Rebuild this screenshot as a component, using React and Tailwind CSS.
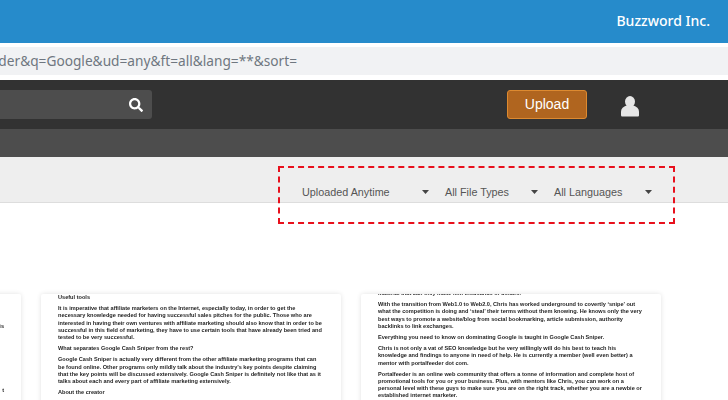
import { FaSearch } from 'react-icons/fa';

const filters = [
  { label: 'Uploaded Anytime', width: 'w-[127px] mr-[16px]' },
  { label: 'All File Types', width: 'w-[93px] mr-[16px]' },
  { label: 'All Languages', width: 'w-[98px]' },
];

const middleCard = [
  { lines: ['Useful tools'] },
  {
    lines: [
      'It is imperative that affiliate marketers on the Internet, especially today, in order to get the',
      'necessary knowledge needed for having successful sales pitches for the public. Those who are',
      'interested in having their own ventures with affiliate marketing should also know that in order to be',
      'successful in this field of marketing, they have to use certain tools that have already been tried and',
      'tested to be very successful.',
    ],
  },
  { lines: ['What separates Google Cash Sniper from the rest?'] },
  {
    lines: [
      'Google Cash Sniper is actually very different from the other affiliate marketing programs that can',
      'be found online. Other programs only mildly talk about the industry’s key points despite claiming',
      'that the key points will be discussed extensively. Google Cash Sniper is definitely not like that as it',
      'talks about each and every part of affiliate marketing extensively.',
    ],
  },
  { lines: ['About the creator'] },
];

const rightCard = [
  { lines: ['material that can only make him thousands of dollars.'] },
  { lines: ['With the transition from Web1.0 to Web2.0, Chris has worked underground to covertly ‘snipe’ out',
    'what the competition is doing and ‘steal’ their terms without them knowing. He knows only the very',
    'best ways to promote a website/blog from social bookmarking, article submission, authority',
    'backlinks to link exchanges.'] },
  { lines: ['Everything you need to know on dominating Google is taught in Google Cash Sniper.'] },
  { lines: ['Chris is not only a vat of SEO knowledge but he very willingly will do his best to teach his',
    'knowledge and findings to anyone in need of help. He is currently a member (well even better) a',
    'mentor with portalfeeder dot com.'] },
  { lines: ['Portalfeeder is an online web community that offers a tonne of information and complete host of',
    'promotional tools for you or your business. Plus, with mentors like Chris, you can work on a',
    'personal level with these guys to make sure you are on the right track, whether you are a newbie or',
    'established internet marketer.'] },
];

const docText = "font-['Liberation_Sans',sans-serif] text-[5.6px] leading-[7.2px] font-bold text-[#1f1f1f] whitespace-nowrap blur-[0.5px]";
const cardClass = 'w-[300px] h-[120px] bg-white rounded-[2px] shadow-[0_0_5px_rgba(0,0,0,0.12)] overflow-hidden';

function Doc({ blocks, className = '' }) {
  return (
    <div className={`flex flex-col gap-[4px] ${docText} ${className}`}>
      {blocks.map((b, i) => (
        <div key={i}>
          {b.lines.map((l, j) => (
            <div key={j}>{l}</div>
          ))}
        </div>
      ))}
    </div>
  );
}

export default function App() {
  return (
    <div className="relative w-[728px] h-[400px] overflow-hidden bg-white">
      {/* Top bar */}
      <div className="h-[43px] bg-[#268bcb] flex items-center justify-end pr-[18px] pb-[2px] text-white text-[14px] font-medium font-['Noto_Sans',sans-serif]">
        Buzzword Inc.
      </div>

      {/* Address bar */}
      <div className="mt-[4px] h-[28px] bg-[#f1f2f4] flex items-center">
        <div className="w-[297px] flex justify-end whitespace-nowrap text-[13.7px] text-[#6f7780] font-['Noto_Sans',sans-serif]">
          der&amp;q=Google&amp;ud=any&amp;ft=all&amp;lang=**&amp;sort=
        </div>
      </div>

      {/* Nav */}
      <div className="mt-[5px] h-[49px] bg-[#323232] flex items-center">
        <div className="w-[152px] h-[29px] bg-[#4d4d4d] rounded-r-[3px] flex items-center justify-end pr-[9px]">
          <FaSearch className="text-white text-[14px]" />
        </div>
        <button className="ml-[355px] w-[80px] h-[29px] bg-[#b0651f] border border-[#dd8a30] rounded-[3px] text-white text-[14px] font-['Liberation_Sans',sans-serif]">
          Upload
        </button>
        <svg className="ml-[34px] mt-[3px]" width="18" height="21" viewBox="0 0 18 21">
          <ellipse cx="9" cy="5.6" rx="5" ry="5.6" fill="#e6e6e6" />
          <path d="M1.5 20.5C.5 20.5 0 20 0 19v-3.5C0 12.5 2.5 10.5 5.5 9.5h7c3 1 5.500 3 5.500 6V19c0 1-.5 1.500-1.500 1.500z" fill="#e6e6e6" />
        </svg>
      </div>
      <div className="h-[28px] bg-[#4d4d4d]" />

      {/* Filters */}
      <div className="h-[46px] bg-[#eeeeee] border-b border-[#dddddd] flex items-end pb-[1px] pl-[302px]">
        {filters.map((f) => (
          <div
            key={f.label}
            className={`${f.width} flex items-center justify-between text-[10.8px] leading-[18px] text-[#555] font-['Liberation_Sans',sans-serif]`}
          >
            <span>{f.label}</span>
            <svg width="7" height="4" viewBox="0 0 7 4">
              <path d="M0 0h7L3.500 4z" fill="#444" />
            </svg>
          </div>
        ))}
      </div>

      {/* Document previews */}
      <div className="mt-[91px] ml-[-279px] flex gap-[20px]">
        <div className={`${cardClass} flex flex-col items-end pr-[17px] pt-[29px] ${docText}`}>
          <div>is</div>
          <div className="mt-[57px]">t</div>
        </div>
        <div className={`${cardClass} pl-[17px]`}>
          <Doc blocks={middleCard} />
        </div>
        <div className={`${cardClass} pl-[17px]`}>
          <Doc blocks={rightCard} className="-mt-[4px]" />
        </div>
      </div>

      {/* Highlight */}
      <div className="absolute left-[278px] top-[166px] w-[397px] h-[58px] border-2 border-dashed border-[#e8101c]" />
    </div>
  );
}
